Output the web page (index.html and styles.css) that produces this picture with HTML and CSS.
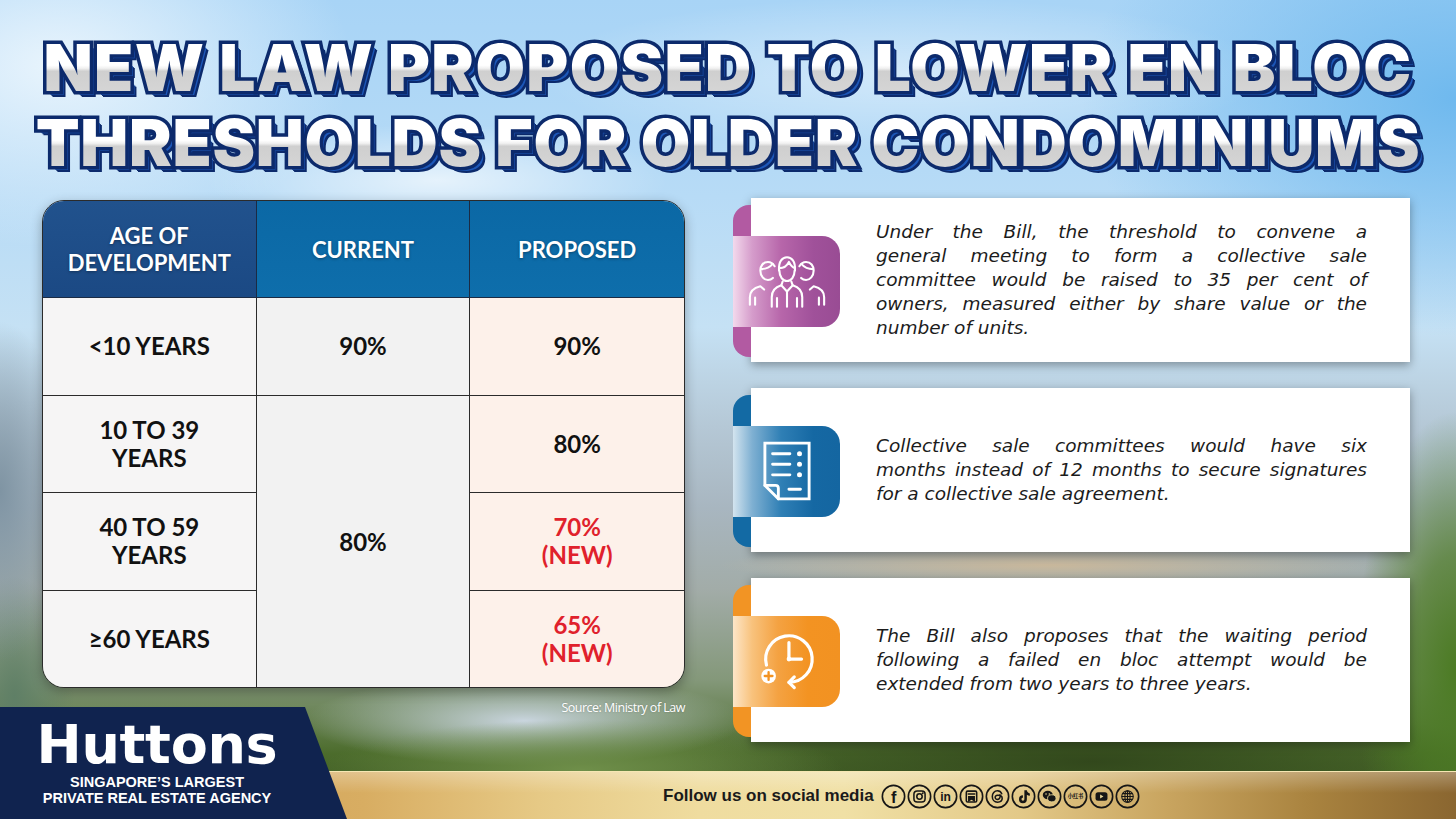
FILE: index.html
```html
<!DOCTYPE html>
<html lang="en">
<head>
<meta charset="utf-8">
<title>New Law Proposed to Lower En Bloc Thresholds</title>
<link rel="stylesheet" href="styles.css">
</head>
<body>
<div class="page">
  <h1 class="title">
    <span class="tline t1" data-text="NEW LAW PROPOSED TO LOWER EN BLOC"><span class="tfront">NEW LAW PROPOSED TO LOWER EN BLOC</span></span>
    <span class="tline t2" data-text="THRESHOLDS FOR OLDER CONDOMINIUMS"><span class="tfront">THRESHOLDS FOR OLDER CONDOMINIUMS</span></span>
  </h1>

  <main class="content">
    <section class="left">
      <div class="table-wrap">
        <table class="thr">
          <colgroup><col><col><col></colgroup>
          <thead>
            <tr>
              <th class="h-age">AGE OF<br>DEVELOPMENT</th>
              <th class="h-blue">CURRENT</th>
              <th class="h-blue last-col">PROPOSED</th>
            </tr>
          </thead>
          <tbody>
            <tr>
              <td class="c-age">&lt;10 YEARS</td>
              <td class="c-cur">90%</td>
              <td class="c-prop last-col">90%</td>
            </tr>
            <tr>
              <td class="c-age">10 TO 39<br>YEARS</td>
              <td class="c-cur last-row" rowspan="3">80%</td>
              <td class="c-prop last-col">80%</td>
            </tr>
            <tr>
              <td class="c-age">40 TO 59<br>YEARS</td>
              <td class="c-prop last-col new">70%<br>(NEW)</td>
            </tr>
            <tr>
              <td class="c-age last-row">&ge;60 YEARS</td>
              <td class="c-prop last-col last-row new">65%<br>(NEW)</td>
            </tr>
          </tbody>
        </table>
      </div>
      <p class="source">Source: Ministry of Law</p>
    </section>

    <section class="cards">
      <article class="card card-purple">
        <div class="ribbon">
          <span class="strip"></span>
          <span class="box">
            <svg class="ico-people" viewBox="0 0 84 56" width="80" height="54" fill="none" stroke="#fff" stroke-width="2.2" stroke-linecap="round" stroke-linejoin="round">
              <path d="M29 12.5C27 9 24.5 8 22 8c-5 0-8 4-8 9 0 6 4 10 8 10 2 0 4-1 5.2-2.2"/>
              <path d="M14.5 15.5c5 0 9.5-2 12.5-5.5"/>
              <path d="M3 53v-8c0-7 5-10 11-11.5l4 3.5"/>
              <path d="M8.5 45.5v7.5"/>
              <path d="M55 12.5C57 9 59.5 8 62 8c5 0 8 4 8 9 0 6-4 10-8 10-2 0-4-1-5.2-2.2"/>
              <path d="M69.5 15.5c-5 0-9.5-2-12.5-5.5"/>
              <path d="M81 53v-8c0-7-5-10-11-11.5l-4 3.5"/>
              <path d="M75.5 45.5v7.5"/>
              <path d="M33.6 17c-.6-10 3.6-14 8.4-14s9 4 8.4 14"/>
              <path d="M34 14.5c4.5 0 8-2.5 10-6.5 1.5 3 3.5 5.5 6.4 6.5"/>
              <path d="M34 17c0 6.5 3.6 11 8 11s8-4.5 8-11"/>
              <path d="M26 55v-10c0-8 5-11 10-12.5l6 6.5 6-6.5c5 1.5 10 4.5 10 12.5v10"/>
              <path d="M36 32.5l1.5-4M48 32.5l-1.5-4M42 39v16M31.5 46v9M52.5 46v9"/>
            </svg>
          </span>
        </div>
        <p class="card-text">
          <span class="ln">Under the Bill, the threshold to convene a</span>
          <span class="ln">general meeting to form a collective sale</span>
          <span class="ln">committee would be raised to 35 per cent of</span>
          <span class="ln">owners, measured either by share value or the</span>
          <span class="ln ln-end">number of units.</span>
        </p>
      </article>

      <article class="card card-blue">
        <div class="ribbon">
          <span class="strip"></span>
          <span class="box">
            <svg class="ico-doc" viewBox="0 0 52 64" width="50" height="62" fill="none" stroke="#fff" stroke-width="3" stroke-linecap="round">
              <path d="M3 3H49V61H17L3 47Z" stroke-linejoin="miter" stroke-linecap="butt"/>
              <path d="M3 47H14q3 0 3 3V61" stroke-linejoin="round"/>
              <path d="M11 14H29M11 25H29M11 36H29M28 51H40"/>
              <circle cx="39" cy="14" r="2.6" fill="#fff" stroke="none"/>
              <circle cx="39" cy="25" r="2.6" fill="#fff" stroke="none"/>
              <circle cx="39" cy="36" r="2.6" fill="#fff" stroke="none"/>
            </svg>
          </span>
        </div>
        <p class="card-text">
          <span class="ln">Collective sale committees would have six</span>
          <span class="ln">months instead of 12 months to secure signatures</span>
          <span class="ln ln-end">for a collective sale agreement.</span>
        </p>
      </article>

      <article class="card card-orange">
        <div class="ribbon">
          <span class="strip"></span>
          <span class="box">
            <svg class="ico-clock" viewBox="0 0 64 64" width="62" height="62" fill="none" stroke="#fff" stroke-width="3.3" stroke-linecap="round" stroke-linejoin="round">
              <path d="M10.8 36.2A24 24 0 1 1 34 54"/>
              <path d="M39.5 48.5L34 54l5.5 5.5"/>
              <path d="M34 30V13M34 30H47"/>
              <circle cx="34" cy="30" r="2.4" fill="#fff" stroke="none"/>
              <circle cx="13" cy="47.5" r="7.6" fill="#fff" stroke="none"/>
              <path d="M13 43.5v8M9 47.5h8" stroke="#f39322" stroke-width="2.4"/>
            </svg>
          </span>
        </div>
        <p class="card-text">
          <span class="ln">The Bill also proposes that the waiting period</span>
          <span class="ln">following a failed en bloc attempt would be</span>
          <span class="ln ln-end">extended from two years to three years.</span>
        </p>
      </article>
    </section>
  </main>

  <footer class="footer">
    <div class="brand">
      <div class="brand-name">Huttons</div>
      <div class="brand-tag">SINGAPORE’S LARGEST<br>PRIVATE REAL ESTATE AGENCY</div>
    </div>
    <div class="goldbar">
      <span class="follow">Follow us on social media</span>
      <div class="socials">
        <svg viewBox="0 0 26 26" class="soc"><circle cx="13" cy="13" r="11.6" class="ring"/><text x="13.3" y="19.8" text-anchor="middle" class="soc-f">f</text></svg>
        <svg viewBox="0 0 26 26" class="soc"><circle cx="13" cy="13" r="11.6" class="ring"/><rect x="7.2" y="7.2" width="11.6" height="11.6" rx="3.4" class="line"/><circle cx="13" cy="13" r="2.8" class="line"/><circle cx="16.4" cy="9.6" r="0.9" class="fill"/></svg>
        <svg viewBox="0 0 26 26" class="soc"><circle cx="13" cy="13" r="11.6" class="ring"/><text x="13" y="17.8" text-anchor="middle" class="soc-in">in</text></svg>
        <svg viewBox="0 0 26 26" class="soc"><circle cx="13" cy="13" r="11.6" class="ring"/><rect x="7.6" y="7.4" width="10.8" height="11.4" rx="1.4" class="line"/><path d="M9.6 10.3H16.4" class="line"/><path d="M9.4 12.6H16.6V18.6L13 16.4L9.4 18.6Z" class="fill"/></svg>
        <svg viewBox="0 0 26 26" class="soc"><circle cx="13" cy="13" r="11.6" class="ring"/><path d="M17.4 10.2C16.5 8 14.8 7.1 13 7.1 9.7 7.1 7.6 9.6 7.6 13s2.1 5.9 5.4 5.9c3 0 4.9-1.7 4.9-4 0-2.6-2.6-3.4-4.8-3.2-1.8.2-2.7 1.3-2.5 2.6.2 1.3 1.5 1.9 2.8 1.7 2-.3 2.6-2.3 2.2-4.7" class="line"/></svg>
        <svg viewBox="0 0 26 26" class="soc"><circle cx="13" cy="13" r="11.6" class="ring"/><path d="M13.9 6.6h2.6c.2 1.8 1.4 3 3.1 3.2v2.5c-1.2 0-2.2-.4-3.1-1v4.6a4.1 4.1 0 1 1-4.1-4.1v2.6a1.5 1.5 0 1 0 1.5 1.5Z" class="fill"/></svg>
        <svg viewBox="0 0 26 26" class="soc"><circle cx="13" cy="13" r="11.6" class="ring"/><ellipse cx="11.2" cy="11.4" rx="5.2" ry="4.4" class="fill"/><ellipse cx="15.4" cy="14.9" rx="4.4" ry="3.7" class="fill wc2"/><circle cx="9.4" cy="10.4" r="0.8" fill="#e8d696"/><circle cx="12.8" cy="10.4" r="0.8" fill="#e8d696"/></svg>
        <svg viewBox="0 0 26 26" class="soc"><circle cx="13" cy="13" r="11.6" class="ring"/><text x="13" y="14.9" text-anchor="middle" class="soc-xhs">小红书</text></svg>
        <svg viewBox="0 0 26 26" class="soc"><circle cx="13" cy="13" r="11.6" class="ring"/><rect x="6.8" y="8.6" width="12.4" height="8.8" rx="2.6" class="fill"/><path d="M11.6 10.9V15.1L15 13Z" fill="#ead89a"/></svg>
        <svg viewBox="0 0 26 26" class="soc"><circle cx="13" cy="13" r="11.6" class="ring"/><circle cx="13" cy="13" r="6" class="thin"/><ellipse cx="13" cy="13" rx="2.7" ry="6" class="thin"/><path d="M7 13H19M7.9 10H18.1M7.9 16H18.1M13 7V19" class="thin"/></svg>
      </div>
    </div>
  </footer>
</div>
</body>
</html>
```

FILE: styles.css
```css
* { box-sizing: border-box; }

body {
  margin: 0;
  font-family: "Liberation Sans", Arial, sans-serif;
}

.page {
  width: 1456px;
  height: 819px;
  overflow: hidden;
  display: flex;
  flex-direction: column;
  background:
    radial-gradient(ellipse 330px 80px at 30% 22%, rgba(255,255,255,.65), rgba(255,255,255,0) 70%),
    radial-gradient(ellipse 520px 110px at 62% 9%, rgba(255,255,255,.45), rgba(255,255,255,0) 70%),
    radial-gradient(ellipse 420px 260px at 4% 8%, rgba(236,246,253,.95), rgba(236,246,253,0) 70%),
    radial-gradient(ellipse 520px 330px at 100% 12%, #6fb9ee, rgba(111,185,238,0) 72%),
    radial-gradient(ellipse 100px 260px at 100% 82%, #4c7b24, rgba(76,123,36,.7) 45%, rgba(76,123,36,0) 100%),
    radial-gradient(ellipse 70px 170px at 0% 60%, #7f94a3, rgba(127,148,163,0) 100%),
    radial-gradient(ellipse 60px 120px at 1% 85%, #5f7f66, rgba(95,127,102,0) 100%),
    radial-gradient(ellipse 260px 50px at 40% 94%, #6f8f4a, rgba(111,143,74,0) 100%),
    radial-gradient(ellipse 220px 45px at 36% 88%, #c9d5de, rgba(201,213,222,0) 100%),
    radial-gradient(ellipse 330px 20px at 72% 69%, #c9b89c, rgba(201,184,156,0) 100%),
    radial-gradient(ellipse 430px 60px at 75% 93%, #32481c, rgba(50,72,28,0) 100%),
    linear-gradient(180deg, #a8d4f6 0%, #b7dbf6 24%, #c5e1f4 40%, #b5c8d6 52%, #a8b6c0 62%, #a2aca8 72%, #84987a 83%, #4c6c2c 92%, #3a5321 100%);
}

/* ---------- Title ---------- */
.title {
  margin: 0;
  height: 198px;
  padding-top: 30px;
  display: flex;
  flex-direction: column;
  align-items: center;
  font-family: "Inter", "Liberation Sans", sans-serif;
  font-weight: 900;
  font-size: 64px;
  line-height: 75px;
  white-space: nowrap;
}

.t1 { letter-spacing: 1.3px; }
.t2 { letter-spacing: 0.7px; }

.tline { display: grid; }

.tline::before {
  content: attr(data-text);
  grid-area: 1 / 1;
  color: #0c2a6c;
  -webkit-text-stroke: 7px #0c2a6c;
  text-shadow:
    1px 1px 0 #1d57b8, 2px 2px 0 #1d57b8, 3px 3px 0 #1d57b8,
    4px 4px 0 #1d57b8, 5px 5px 0 #0c2a6c, 6px 6px 0 #0c2a6c;
}

.tfront {
  grid-area: 1 / 1;
  background: linear-gradient(180deg, #ffffff 0%, #ffffff 47%, #f1f1f1 51%, #cfcfcf 55%, #d9d9d9 100%);
  -webkit-background-clip: text;
  background-clip: text;
  color: transparent;
}

/* ---------- Content ---------- */
.content {
  display: flex;
  height: 509px;
  padding-left: 42px;
}

.left {
  width: 643px;
  flex: none;
  padding-top: 2px;
}

.table-wrap {
  height: 488px;
  border: 1.5px solid #2b2b2b;
  border-radius: 22px;
  overflow: hidden;
  box-shadow: 0 4px 12px rgba(0, 0, 0, .3);
}

.thr {
  width: 100%;
  height: 100%;
  border-collapse: separate;
  border-spacing: 0;
  table-layout: fixed;
  font-family: "Lato", "Liberation Sans", sans-serif;
  font-weight: 700;
  text-align: center;
}

.thr th, .thr td {
  border-right: 1.5px solid #2b2b2b;
  border-bottom: 1.5px solid #2b2b2b;
  padding: 0;
  vertical-align: middle;
}

.thr .last-col { border-right: none; }
.thr .last-row { border-bottom: none; }

.thr th {
  height: 97px;
  color: #fff;
  font-size: 22px;
  line-height: 27px;
  font-weight: 700;
  text-shadow: 0 1px 3px rgba(0, 0, 0, .35);
  border-color: #1b2b44;
}

.thr .h-age { background: linear-gradient(180deg, #21528d, #1b4984); }
.thr .h-blue { background: linear-gradient(180deg, #0b68a5, #0e6eab); }

.thr td {
  height: 97.5px;
  font-size: 24px;
  line-height: 28px;
  color: #111;
}

.thr .c-age { background: #f6f5f5; }
.thr .c-cur { background: #f2f2f2; }
.thr .c-prop { background: #fdf1ea; }
.thr .new { color: #e0212c; }

.source {
  margin: 11px 0 0;
  text-align: right;
  font-family: "Open Sans", "Liberation Sans", sans-serif;
  font-size: 12.5px;
  letter-spacing: -0.5px;
  color: #fff;
  text-shadow: 0 0 2px rgba(0, 0, 0, .25);
}

/* ---------- Cards ---------- */
.cards {
  margin-left: 66px;
  width: 659px;
  flex: none;
  display: flex;
  flex-direction: column;
  gap: 26px;
}

.card {
  height: 164px;
  flex: none;
  display: flex;
  align-items: center;
  background: #fff;
  box-shadow: 0 3px 9px rgba(0, 0, 0, .35);
}

.ribbon {
  align-self: stretch;
  flex: none;
  width: 107px;
  margin: 7px 0 5px -18px;
  display: grid;
}

.strip {
  grid-area: 1 / 1;
  width: 18px;
  border-radius: 16px 0 0 16px;
}

.box {
  grid-area: 1 / 1;
  align-self: center;
  height: 91px;
  border-radius: 0 18px 18px 0;
  display: flex;
  align-items: center;
  justify-content: center;
}

.card-purple .strip { background: #b25aa2; }
.card-purple .box { background: linear-gradient(90deg, #f3d9ec 0%, #d59ccb 18%, #b766aa 45%, #a0519a 75%, #994c94 100%); }

.card-blue .strip { background: #136aa4; }
.card-blue .box { background: linear-gradient(90deg, #d3e4ef 0%, #7fb0d2 18%, #2f7fb5 45%, #1568a3 75%, #1466a1 100%); }

.card-orange .strip { background: #f29424; }
.card-orange .box { background: linear-gradient(90deg, #fde6c8 0%, #f8c27c 18%, #f4a242 42%, #f39322 70%, #f29222 100%); }

.card-text {
  margin: 0 43px 0 36px;
  flex: 1;
  font-family: "DejaVu Sans", sans-serif;
  font-style: italic;
  font-size: 18.5px;
  line-height: 24px;
  color: #1c1c1c;
}

.ln {
  display: block;
  white-space: nowrap;
  text-align: justify;
  text-align-last: justify;
}

.ln-end { text-align-last: left; }

/* ---------- Footer ---------- */
.footer {
  flex: none;
  height: 112px;
  display: grid;
  grid-template-columns: 347px 1fr;
  grid-template-rows: 112px;
}

.brand {
  grid-area: 1 / 1;
  z-index: 1;
  background: #10234f;
  clip-path: polygon(0 0, 305px 0, 347px 100%, 0 100%);
  padding-top: 12px;
  color: #fff;
}

.brand-name, .brand-tag {
  width: 314px;
  text-align: center;
}

.brand-name {
  font-family: "DejaVu Sans", sans-serif;
  font-weight: 700;
  font-size: 54px;
  line-height: 52px;
  letter-spacing: -0.3px;
}

.brand-tag {
  margin-top: 3px;
  font-family: "Liberation Sans", Arial, sans-serif;
  font-weight: 700;
  font-size: 14.5px;
  line-height: 16px;
}

.goldbar {
  grid-column: 1 / -1;
  grid-row: 1;
  align-self: end;
  height: 48px;
  display: flex;
  align-items: center;
  padding-left: 663px;
  gap: 7px;
  border-top: 1px solid #f6e7b3;
  background:
    linear-gradient(180deg, rgba(255,255,255,.28) 0%, rgba(255,255,255,0) 45%),
    linear-gradient(90deg, #c99850 0%, #d8ad62 25%, #e6c985 37%, #efdc9f 48%, #f0e0a5 58%, #e3c988 70%, #c9a560 80%, #a9833f 90%, #8a6630 100%);
}

.follow {
  font-family: "Liberation Sans", Arial, sans-serif;
  font-weight: 700;
  font-size: 17px;
  color: #1a1a1a;
  white-space: nowrap;
}

.socials {
  display: flex;
  gap: 1px;
  padding-top: 2px;
}

.soc {
  width: 25px;
  height: 25px;
  flex: none;
}

.soc .ring { fill: none; stroke: #161616; stroke-width: 1.7; }
.soc .line { fill: none; stroke: #161616; stroke-width: 1.6; stroke-linecap: round; stroke-linejoin: round; }
.soc .thin { fill: none; stroke: #161616; stroke-width: 1.1; }
.soc .fill { fill: #161616; }
.soc .wc2 { stroke: #e8d696; stroke-width: 0.9; }

.soc-f {
  font-family: "Liberation Sans", Arial, sans-serif;
  font-weight: 700;
  font-size: 17px;
  fill: #161616;
}

.soc-in {
  font-family: "Liberation Sans", Arial, sans-serif;
  font-weight: 700;
  font-size: 12.5px;
  fill: #161616;
}

.soc-xhs {
  font-family: "Noto Sans CJK SC", sans-serif;
  font-weight: 700;
  font-size: 5.4px;
  fill: #161616;
}
```
